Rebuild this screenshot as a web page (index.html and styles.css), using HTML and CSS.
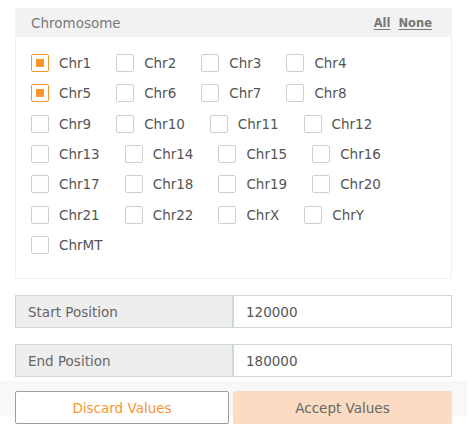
FILE: index.html
```html
<!DOCTYPE html>
<html>
<head>
<meta charset="utf-8">
<link rel="stylesheet" href="styles.css">
</head>
<body>
<div class="wrap">
  <section class="panel">
    <header class="panel-head">
      <span class="panel-title">Chromosome</span>
      <span class="links"><a class="lnk">All</a><a class="lnk">None</a></span>
    </header>
    <div class="panel-body">
      <label class="chk"><span class="box on"></span><span class="txt">Chr1</span></label>
      <label class="chk"><span class="box"></span><span class="txt">Chr2</span></label>
      <label class="chk"><span class="box"></span><span class="txt">Chr3</span></label>
      <label class="chk"><span class="box"></span><span class="txt">Chr4</span></label>
      <label class="chk"><span class="box on"></span><span class="txt">Chr5</span></label>
      <label class="chk"><span class="box"></span><span class="txt">Chr6</span></label>
      <label class="chk"><span class="box"></span><span class="txt">Chr7</span></label>
      <label class="chk"><span class="box"></span><span class="txt">Chr8</span></label>
      <label class="chk"><span class="box"></span><span class="txt">Chr9</span></label>
      <label class="chk"><span class="box"></span><span class="txt">Chr10</span></label>
      <label class="chk"><span class="box"></span><span class="txt">Chr11</span></label>
      <label class="chk"><span class="box"></span><span class="txt">Chr12</span></label>
      <label class="chk"><span class="box"></span><span class="txt">Chr13</span></label>
      <label class="chk"><span class="box"></span><span class="txt">Chr14</span></label>
      <label class="chk"><span class="box"></span><span class="txt">Chr15</span></label>
      <label class="chk"><span class="box"></span><span class="txt">Chr16</span></label>
      <label class="chk"><span class="box"></span><span class="txt">Chr17</span></label>
      <label class="chk"><span class="box"></span><span class="txt">Chr18</span></label>
      <label class="chk"><span class="box"></span><span class="txt">Chr19</span></label>
      <label class="chk"><span class="box"></span><span class="txt">Chr20</span></label>
      <label class="chk"><span class="box"></span><span class="txt">Chr21</span></label>
      <label class="chk"><span class="box"></span><span class="txt">Chr22</span></label>
      <label class="chk"><span class="box"></span><span class="txt">ChrX</span></label>
      <label class="chk"><span class="box"></span><span class="txt">ChrY</span></label>
      <label class="chk"><span class="box"></span><span class="txt">ChrMT</span></label>
    </div>
  </section>

  <div class="field">
    <span class="field-label">Start Position</span>
    <span class="field-input">120000</span>
  </div>
  <div class="field">
    <span class="field-label">End Position</span>
    <span class="field-input">180000</span>
  </div>
</div>
<footer class="actions">
  <button class="btn discard">Discard Values</button>
  <button class="btn accept">Accept Values</button>
</footer>
</body>
</html>
```

FILE: styles.css
```css
html, body {
  margin: 0;
  padding: 0;
  background: #ffffff;
}
body {
  font-family: "DejaVu Sans", "Liberation Sans", sans-serif;
  font-size: 13.5px;
  color: #555;
  width: 471px;
  height: 433px;
  overflow: hidden;
}
.wrap {
  padding: 8px 19px 0 15px;
}
.panel {
  width: 437px;
}
.panel-head {
  height: 29px;
  background: #f2f2f2;
  display: flex;
  align-items: center;
  justify-content: space-between;
  padding: 0 20px 0 16px;
  box-sizing: border-box;
}
.panel-title {
  color: #7a7a7a;
  font-size: 13.5px;
}
.links {
  display: flex;
  gap: 8px;
  font-size: 11.5px;
  font-weight: bold;
  color: #777;
}
.lnk {
  text-decoration: underline;
  text-underline-offset: 2px;
}
.panel-body {
  border: 1px solid #f0f0f0;
  border-top: none;
  padding: 17px 16px 12px 15px;
  display: flex;
  flex-wrap: wrap;
  align-items: flex-start;
}
.chk {
  display: flex;
  align-items: center;
  height: 18px;
  margin: 0 25px 12.33px 0;
}
.box {
  width: 18px;
  height: 18px;
  box-sizing: border-box;
  border: 1px solid #cfcfcf;
  border-radius: 2px;
  background: #fff;
  display: flex;
  align-items: center;
  justify-content: center;
}
.box.on {
  border-color: #f7962e;
}
.box.on::after {
  content: "";
  width: 8px;
  height: 8px;
  background: #f7962e;
}
.txt {
  margin-left: 10px;
  color: #555;
  line-height: 18px;
}
.field {
  display: flex;
  margin-top: 16px;
  width: 437px;
  height: 33px;
}
.field-label {
  width: 218px;
  box-sizing: border-box;
  background: #eeeeee;
  border: 1px solid #cdd7de;
  display: flex;
  align-items: center;
  padding-left: 12px;
  color: #666;
}
.field-input {
  flex: 1;
  box-sizing: border-box;
  background: #fff;
  border: 1px solid #cdd7de;
  display: flex;
  align-items: center;
  padding-left: 12px;
  color: #555;
}
.actions {
  margin-top: 4px;
  width: 467px;
  height: 35px;
  background: #f8f8f8;
  padding: 10px 0 0 15px;
  box-sizing: border-box;
  display: flex;
  align-items: flex-start;
  gap: 4px;
}
.btn {
  font-family: inherit;
  font-size: 13.5px;
  height: 33px;
  border-radius: 2px;
  box-sizing: border-box;
  padding: 0;
  flex-shrink: 0;
}
.discard {
  width: 214px;
  background: #fff;
  border: 1px solid #9e9e9e;
  color: #f7962e;
}
.accept {
  width: 219px;
  background: #fbdcc2;
  border: 1px solid #fbdcc2;
  color: #666;
}
```
